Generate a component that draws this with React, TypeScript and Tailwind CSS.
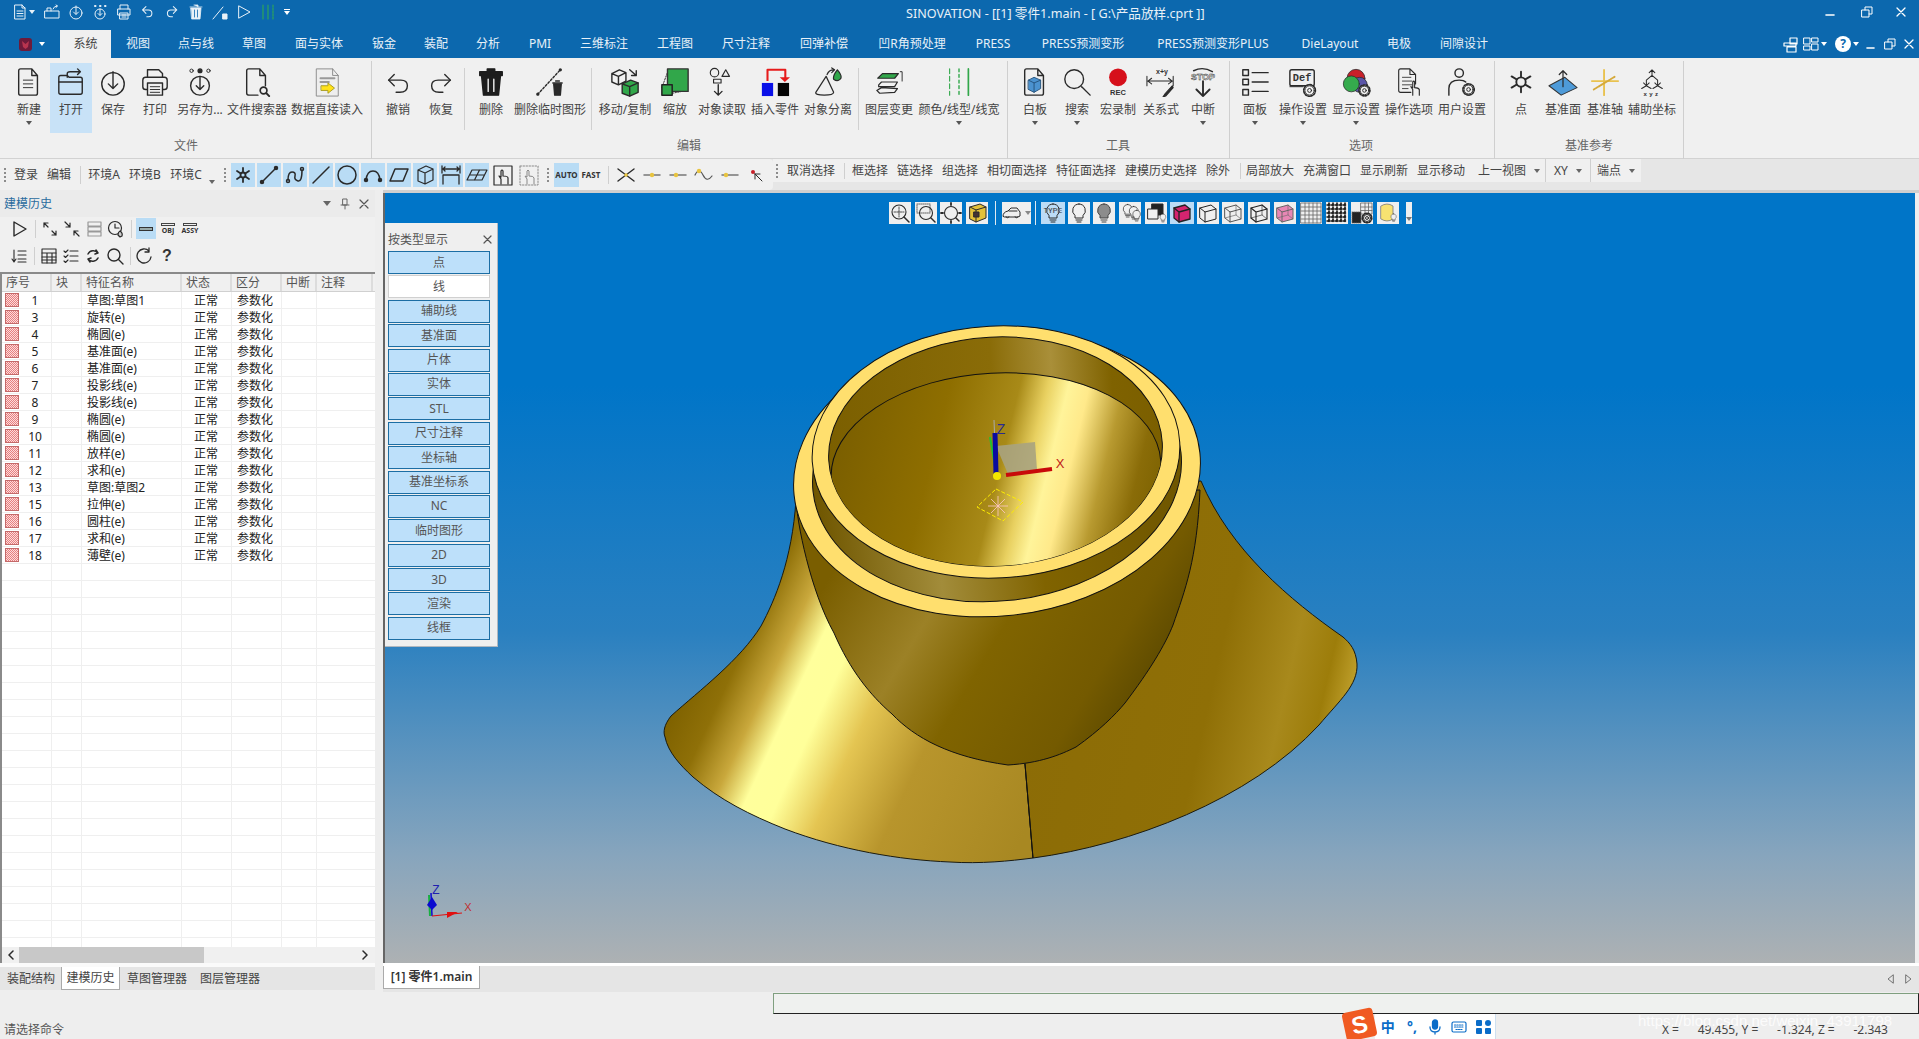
import React from "react";

type N = React.ReactNode;
const K = "#2a2a2a";

function S({ s = 30, v = 32, w = 1.5, c = K, children }: { s?: number; v?: number; w?: number; c?: string; children: N }) {
  return (
    <svg width={s} height={s} viewBox={`0 0 ${v} ${v}`} fill="none" stroke={c} strokeWidth={w} strokeLinecap="round" strokeLinejoin="round" className="block shrink-0">
      {children}
    </svg>
  );
}
const Gear = ({ x, y, r = 4 }: { x: number; y: number; r?: number }) => (
  <g>
    <circle cx={x} cy={y} r={r + 1.2} fill="#f0f0f0" stroke={K} strokeWidth={1.8} strokeDasharray="1.6 1.6" />
    <circle cx={x} cy={y} r={r} fill="#f0f0f0" stroke={K} strokeWidth={1} />
    <circle cx={x} cy={y} r={r / 2.4} stroke={K} strokeWidth={1} />
  </g>
);
const Doc = ({ f = "none" }: { f?: string }) => <path d="M7 2h12l6 7v19q0 2-2 2H7q-2 0-2-2V4q0-2 2-2zM19 2v7h6" fill={f} />;

const ribbonIcons: Record<string, N> = {
  new: <S><Doc /><path d="M10 14h10M10 18h10M10 22h10" strokeWidth={1} /></S>,
  open: (
    <S>
      <path d="M3 13v14q0 2 2 2h21q2 0 2-2V13q0-2-2-2H14l-2-2H5q-2 0-2 2z" />
      <path d="M3 16h25" />
      <path d="M12 11V7q0-2 3-2h11M23 2l3 3-3 3" />
    </S>
  ),
  save: <S><circle cx="16" cy="18" r="12" /><path d="M16 5v18M11 18l5 5 5-5" /></S>,
  print: (
    <S>
      <path d="M8 11V3h12l4 4v4" />
      <rect x="3" y="11" width="26" height="13" rx="3" />
      <rect x="8" y="17" width="16" height="13" fill="#f0f0f0" />
      <path d="M11 21h10M11 24h10M11 27h10" strokeWidth={1} />
    </S>
  ),
  saveas: (
    <S>
      <circle cx="7" cy="4" r="1.8" strokeWidth={1} /><circle cx="16" cy="4" r="2" fill={K} /><circle cx="25" cy="4" r="1.8" strokeWidth={1} />
      <circle cx="16" cy="20" r="10" /><path d="M16 10v14M12 20l4 4 4-4" />
    </S>
  ),
  filesearch: (
    <S>
      <path d="M8 30q-3 0-3-2V4q0-2 2-2h12l6 7v11M19 2v7h6M8 30h9" />
      <circle cx="23" cy="25" r="3.6" strokeWidth={1.8} /><path d="M26 28l3 3" strokeWidth={2} />
    </S>
  ),
  dataread: (
    <S w={1}>
      <path d="M5 2h17l6 7v22H5zM22 2v7h6" fill="#eeeeee" stroke="#8a8a8a" />
      <path d="M9 12h15M9 16h9" stroke="#999" strokeWidth={2} />
      <path d="M10 20h7v-3l7 5.5-7 5.5v-3h-7z" fill="#ffe21a" stroke="#a89a20" />
    </S>
  ),
  undo: <S><path d="M12 8L6 14l6 6" /><path d="M6 14h13q7 0 7 6 0 7-8 7h-4" /></S>,
  redo: <S><path d="M20 8l6 6-6 6" /><path d="M26 14H13q-7 0-7 6 0 7 8 7h4" /></S>,
  del: (
    <S c="#1d1d1d">
      <rect x="4" y="5" width="24" height="4" fill="#1d1d1d" />
      <rect x="12" y="2" width="8" height="3" fill="#1d1d1d" />
      <path d="M6 10h20l-2 20H8z" fill="#1d1d1d" />
      <path d="M13 13v13M19 13v13" stroke="#f0f0f0" strokeWidth={1.5} />
    </S>
  ),
  deltemp: (
    <S>
      <path d="M3 29L27 3" strokeDasharray="2 2" />
      <circle cx="27" cy="3" r="1" fill={K} /><circle cx="3" cy="29" r="1" fill={K} />
      <path d="M19 17h10M22 15h4" />
      <path d="M20 18h8l-1 12h-6z" fill={K} />
    </S>
  ),
  move: (
    <S>
      <path d="M2 7l8-4 7 3v9l-8 4-7-3zM2 7l7 3 8-4M9 10v9" fill="#f2f2f2" />
      <path d="M13 18l9-4 8 3v10l-9 4-8-3z" fill="#31a74a" />
      <path d="M13 18l8 3 9-4M21 21v10" />
      <path d="M21 3l7 6M28 4v5h-5" />
    </S>
  ),
  scale: (
    <S>
      <path d="M2 22L9 3" strokeDasharray="1.5 1.5" strokeWidth={1} />
      <path d="M13 28l16-3" strokeDasharray="1.5 1.5" strokeWidth={1} />
      <rect x="8" y="2" width="22" height="24" fill="#31a74a" stroke="#333" />
      <rect x="2" y="19" width="11" height="11" fill="#31a74a" stroke="#222" strokeWidth={1.6} />
    </S>
  ),
  objread: (
    <S w={1.2}>
      <circle cx="8" cy="6" r="4.5" />
      <path d="M16 10l4-7 4 7z" />
      <rect x="7" y="13" width="8" height="4" />
      <path d="M12 19v11M8 26l4 4 4-4" strokeWidth={1.5} />
    </S>
  ),
  insert: (
    <S>
      <path d="M8 15V3h19v9" stroke="#e61b1b" strokeWidth={2.2} strokeLinecap="butt" />
      <path d="M21 11h11l-5.5 5z" fill="#e61b1b" stroke="none" />
      <rect x="2" y="17" width="12" height="14" fill="#0a10e8" stroke="none" />
      <rect x="19" y="17" width="12" height="14" fill="#050505" stroke="none" />
    </S>
  ),
  separate: (
    <S w={1.3}>
      <path d="M14 10L3 27q-1 3 9 3t10-3z" />
      <path d="M15 8q2-5 7-5M20 1l3 2-3 3" />
      <path d="M26 3q6 7 3 10t-7 0q-1-4 4-10z" fill="#31a74a" />
    </S>
  ),
  layer: (
    <S w={1.3}>
      <path d="M8 22l-5 3 3 3 16-1 3-4zM5 19l3-3h17l-3 5H5z" fill="#f0f0f0" />
      <path d="M4 10l5-5h17l-4 5z" fill="#31a74a" transform="translate(0 2)" />
      <path d="M28 5h2v10" strokeWidth={1} />
    </S>
  ),
  color: (
    <S>
      <path d="M6 2v28" stroke="#31a74a" strokeDasharray="5 3" strokeWidth={1.2} />
      <path d="M16 2v28" stroke="#31a74a" strokeDasharray="3 3" strokeWidth={1.5} />
      <path d="M26 2v28" stroke="#31a74a" strokeWidth={1.8} />
    </S>
  ),
  board: (
    <S>
      <Doc />
      <path d="M9 14l6-3 7 3v9l-7 4-6-3z" fill="#4b92cf" stroke="#24527c" strokeWidth={1} />
      <path d="M9 14l6 3 7-3M15 17v10" stroke="#24527c" strokeWidth={1} />
    </S>
  ),
  search: <S><circle cx="13" cy="13" r="10" /><path d="M21 21l9 9" /></S>,
  rec: (
    <S>
      <circle cx="16" cy="11" r="9.5" fill="#d6101b" stroke="none" />
      <text x="16" y="30" textAnchor="middle" fontSize="8" fontWeight="700" fill="#333" stroke="none" fontFamily="Liberation Sans">REC</text>
    </S>
  ),
  rel: (
    <S w={1.1}>
      <text x="17" y="7" textAnchor="middle" fontSize="7.5" fontWeight="700" fill="#333" stroke="none" fontFamily="Liberation Sans">x+y</text>
      <path d="M1 10v10M29 10v10M2 15h26M6 12l-4 3 4 3M24 12l4 3-4 3" />
      <path d="M28 20L20 29l-2 3 3-1 8-9z" fill={K} />
    </S>
  ),
  stop: (
    <S w={1.5}>
      <path d="M6 4q10-5 20 1" />
      <text x="16" y="14" textAnchor="middle" fontSize="9.5" fontWeight="700" fill="#f0f0f0" stroke={K} strokeWidth={0.5} fontFamily="Liberation Sans">STOP</text>
      <path d="M16 15v16M9 24l7 7 7-7" strokeWidth={2} />
    </S>
  ),
  panel: (
    <S>
      <rect x="3" y="3" width="6" height="6" /><rect x="3" y="13" width="6" height="6" /><rect x="3" y="24" width="6" height="6" />
      <path d="M13 6h17M13 16h17M13 26h17" />
    </S>
  ),
  def: (
    <S>
      <rect x="2" y="3" width="26" height="17" rx="2" />
      <path d="M2 21l14 0" strokeWidth={1} />
      <text x="15" y="15" textAnchor="middle" fontSize="11" fontWeight="700" fill="#333" stroke="none" fontFamily="Liberation Mono">Def</text>
      <Gear x={23} y={25} r={5} />
    </S>
  ),
  disp: (
    <S w={0.8}>
      <circle cx="16" cy="12" r="9.5" fill="#c8202a" />
      <circle cx="20" cy="19" r="8" fill="#5a55a8" />
      <circle cx="11" cy="18" r="8.5" fill="#35ab4d" />
      <Gear x={25} y={25} r={4.6} />
    </S>
  ),
  opopt: (
    <S w={1.2}>
      <path d="M18 27H7q-2 0-2-2V4q0-2 2-2h10l6 6v10M17 2v6h6" />
      <path d="M9 11h9M9 15h10M9 19h10M9 23h6" strokeWidth={0.9} />
      <path d="M20 30v-6l-2-3 2 1v-6q1-2 2 0v6q4 0 5 2v6" fill="#f0f0f0" />
    </S>
  ),
  user: (
    <S>
      <circle cx="13" cy="6.5" r="4.5" />
      <path d="M2 30V23q0-9 11-9 5 0 7 2" />
      <Gear x={23} y={24} r={4.8} />
    </S>
  ),
  point: (
    <S w={2}>
      <path d="M16 5v22M6 10l20 12M26 10L6 22" />
      <circle cx="16" cy="16" r="5" fill="#f0f0f0" strokeWidth={2} />
    </S>
  ),
  plane: (
    <S w={1.1}>
      <path d="M1 20L18 11l13 11-17 8z" fill="#4e9bd9" stroke="#333" />
      <path d="M16 21V4M12 8l4-4 4 4" strokeWidth={1.3} />
    </S>
  ),
  axis: (
    <S c="#e9c24f" w={2}>
      <path d="M15 3v27" />
      <path d="M2 15h28" />
      <path d="M4 24L27 10" stroke="#d5a93a" strokeDasharray="2 1" />
    </S>
  ),
  aux: (
    <S w={1.1}>
      <path d="M16 3v6M13 6l3-3 3 3M16 9l-6 5M16 9l6 5M10 14v5M7 17l3 3 3-3M22 14v5M19 17l3 3 3-3M10 20l-5 3M10 20l5 3M22 20l-5 3M22 20l5 3" />
      <text x="16" y="31" textAnchor="middle" fontSize="6.5" fontWeight="700" fill="#333" stroke="none" letterSpacing="2.5" fontFamily="Liberation Sans">xyz</text>
    </S>
  ),
};

type Btn = { l: string; w: number; i: string; a?: boolean; on?: boolean } | { sep: [number, number] };
type Group = { title: string; pl: number; pr: number; items: Btn[] };
const groups: Group[] = [
  { title: "文件", pl: 8, pr: 7, items: [
    { l: "新建", w: 42, i: "new", a: true }, { l: "打开", w: 42, i: "open", on: true }, { l: "保存", w: 42, i: "save" }, { l: "打印", w: 42, i: "print" },
    { l: "另存为...", w: 48, i: "saveas" }, { l: "文件搜索器", w: 66, i: "filesearch" }, { l: "数据直接读入", w: 74, i: "dataread" },
  ] },
  { title: "编辑", pl: 5, pr: 6, items: [
    { l: "撤销", w: 42, i: "undo" }, { l: "恢复", w: 44, i: "redo" }, { sep: [1, 5] }, { l: "删除", w: 42, i: "del" }, { l: "删除临时图形", w: 76, i: "deltemp" }, { sep: [3, 3] },
    { l: "移动/复制", w: 60, i: "move" }, { l: "缩放", w: 40, i: "scale" }, { l: "对象读取", w: 54, i: "objread" }, { l: "插入零件", w: 52, i: "insert" }, { l: "对象分离", w: 54, i: "separate" }, { sep: [3, 2] },
    { l: "图层变更", w: 56, i: "layer" }, { l: "颜色/线型/线宽", w: 84, i: "color", a: true },
  ] },
  { title: "工具", pl: 6, pr: 7, items: [
    { l: "白板", w: 42, i: "board", a: true }, { l: "搜索", w: 42, i: "search", a: true }, { l: "宏录制", w: 40, i: "rec" }, { l: "关系式", w: 46, i: "rel" }, { l: "中断", w: 38, i: "stop", a: true },
  ] },
  { title: "选项", pl: 4, pr: 6, items: [
    { l: "面板", w: 42, i: "panel", a: true }, { l: "操作设置", w: 54, i: "def", a: true }, { l: "显示设置", w: 52, i: "disp", a: true }, { l: "操作选项", w: 54, i: "opopt" }, { l: "用户设置", w: 52, i: "user" },
  ] },
  { title: "基准参考", pl: 5, pr: 5, items: [
    { l: "点", w: 42, i: "point" }, { l: "基准面", w: 42, i: "plane" }, { l: "基准轴", w: 42, i: "axis" }, { l: "辅助坐标", w: 52, i: "aux" },
  ] },
];

const tabs: [string, number][] = [
  ["系统", 51], ["视图", 54], ["点与线", 62], ["草图", 54], ["面与实体", 76], ["钣金", 54], ["装配", 50], ["分析", 54], ["PMI", 50], ["三维标注", 78],
  ["工程图", 64], ["尺寸注释", 78], ["回弹补偿", 78], ["凹R角预处理", 98], ["PRESS", 64], ["PRESS预测变形", 116], ["PRESS预测变形PLUS", 144], ["DieLayout", 90], ["电极", 48], ["间隙设计", 82],
];

const W = "#e8f1f8";
const qat: N[] = [
  <S s={16} v={16} c={W} w={1}><path d="M3 1h7l3 3v11H3zM5 7h6M5 9.500h6M5 12h6M10 1v3h3" /></S>,
  <S s={16} v={16} c={W} w={1}><path d="M1 7h14v7H1zM3 7V4h4v3M9 5q1-3 4-3M12 1l1.500 1-1.500 1.500" /></S>,
  <S s={16} v={16} c={W} w={1}><circle cx="8" cy="9" r="6" /><path d="M8 2v8M5.500 8L8 10.500 10.500 8" /></S>,
  <S s={16} v={16} c={W} w={1}><path d="M3 2h.5M8 2h.5M13 2h.5" strokeWidth={2} /><circle cx="8" cy="10" r="5" /><path d="M8 5v6M6 9.500l2 2 2-2" /></S>,
  <S s={16} v={16} c={W} w={1}><path d="M4 5V1h8v4M2 5h12v6H2zM4 9h8v6H4zM6 11h4M6 13h4" /></S>,
  <S s={16} v={16} c={W} w={1.2}><path d="M6 2L2 6l4 4M2 6h7q4 0 4 4t-4 4H7" transform="scale(.85) translate(1 1)" /></S>,
  <S s={16} v={16} c={W} w={1.2}><path d="M10 2l4 4-4 4M14 6H7q-4 0-4 4t4 4h2" transform="scale(.85) translate(1 1)" /></S>,
  <S s={16} v={16} c={W} w={0.8}><path d="M2 3h12M6 1h4v2M3 4h10l-1 11H4z" fill={W} /><path d="M6.500 6v7M9.500 6v7" stroke="#0c68ae" /></S>,
  <S s={16} v={16} c={W} w={1}><path d="M1 15L11 3" /><path d="M11 10h4v5h-4z" fill={W} /></S>,
  <S s={16} v={16} c={W} w={1}><path d="M3 2l11 6-11 6z" /></S>,
  <S s={16} v={16} c="#2ea45a" w={1.2}><path d="M3 1v14M8 1v14" /><path d="M13 1v14" strokeDasharray="2 1" /></S>,
];

const Grip = ({ w = 8 }: { w?: number }) => (
  <div className="flex flex-col items-center justify-center gap-[2px] shrink-0" style={{ width: w }}>
    {[0, 1, 2, 3].map((i) => <div key={i} className="w-[2px] h-[2px] bg-[#8c8c8c]" />)}
  </div>
);
const Tri = ({ c = "#666" }: { c?: string }) => <span className="inline-block w-0 h-0 border-l-[3px] border-r-[3px] border-t-[4px] border-l-transparent border-r-transparent" style={{ borderTopColor: c }} />;

const rowIcons: N[] = [
  <S s={20} v={20} w={1.8}><path d="M10 3v14M4 6l12 8M16 6L4 14" /><circle cx="10" cy="10" r="2.5" fill="#b9dcf5" /></S>,
  <S s={22} v={22}><path d="M4 18L18 4" /><circle cx="4" cy="18" r="1.500" fill={K} /><circle cx="18" cy="4" r="1.500" fill={K} /></S>,
  <S s={22} v={22}><path d="M4 16q0-8 4-8t3 4 3 5 4-11" /><circle cx="4" cy="17" r="1.500" /><circle cx="18" cy="5" r="1.500" /></S>,
  <S s={22} v={22}><path d="M3 19L19 3" /></S>,
  <S s={22} v={22}><circle cx="11" cy="11" r="9" /></S>,
  <S s={22} v={22}><path d="M4 16q1-9 7-9t7 9" /><circle cx="4" cy="16" r="1.500" fill={K} /><circle cx="18" cy="16" r="1.500" fill={K} /></S>,
  <S s={22} v={22}><path d="M7 5h13l-5 12H2z" /></S>,
  <S s={22} v={22} w={1.2}><path d="M4 6l8-4 7 3v11l-8 4-7-3zM4 6l7 3 8-4M11 9v11" /></S>,
  <S s={22} v={22} w={1.3}><path d="M2 2v7M20 2v7M3 5h16M5 3L3 5l2 2M17 3l2 2-2 2M3 11h16M3 11v9M19 11v9" /></S>,
  <S s={22} v={22} w={1.2}><path d="M6 6h15l-5 10H1zM3.500 11h15M13.500 6l-5 10" /></S>,
  <S s={22} v={22} w={1.2}><rect x="2" y="2" width="18" height="19" /><path d="M9 20v-5l-2-3 2 1V7q1-2 2 0v5q5 0 5 2v6" fill="#f0f0f0" /></S>,
  <S s={22} v={22} c="#888" w={1}><rect x="2" y="2" width="18" height="19" strokeDasharray="1.500 1.500" /><path d="M9 20v-5l-2-3 2 1V7q1-2 2 0v5q5 0 5 2v6" /></S>,
];
const snapIcons: N[] = [
  <S s={20} v={20} w={1.4}><path d="M2 4l16 12M18 4L2 16" /><circle cx="10" cy="10" r="1.800" fill="#e8c440" stroke="none" /></S>,
  <S s={20} v={20} c="#777"><path d="M2 10h16" /><circle cx="10" cy="10" r="2.200" fill="#e8c440" stroke="none" /></S>,
  <S s={20} v={20} c="#777"><path d="M2 10h16" /><circle cx="8" cy="10" r="2.200" fill="#e8c440" stroke="none" /></S>,
  <S s={20} v={20} c="#555" w={1.2}><path d="M1 10q4-8 8 0t9 1" /><circle cx="5" cy="6" r="2.200" fill="#e8c440" stroke="none" /></S>,
  <S s={20} v={20} c="#777"><path d="M2 10h16" /><circle cx="6" cy="10" r="2.200" fill="#e8c440" stroke="none" /></S>,
  <S s={20} v={20} w={1}><circle cx="7" cy="7" r="2" fill="#c8202a" stroke="none" /><path d="M9 9l7 7M9 9v5M9 9h5" /></S>,
];

const Pipe = ({ h = 18, c = "#cfcfcf", w = 8 }: { h?: number; c?: string; w?: number }) => (
  <div className="flex items-center justify-center shrink-0" style={{ width: w }}><div className="w-px" style={{ height: h, background: c }} /></div>
);
const TB = ({ t, w, a }: { t: string; w: number; a?: boolean }) => (
  <div className="flex items-center justify-center gap-[8px] whitespace-nowrap shrink-0" style={{ width: w }}>{t}{a && <Tri />}</div>
);

const histIcons1: (N | "|")[] = [
  <S s={18} v={18} w={1.4}><path d="M3 2l12 7-12 7z" /></S>,
  "|",
  <S s={18} v={18} w={1.2}><path d="M3 3l4 4M3 3h4M3 3v4M11 11l4 4M15 15h-4M15 15v-4" /></S>,
  <S s={18} v={18} w={1.2}><path d="M2 2l5 5M7 7H3M7 7V3M16 16l-5-5M11 11h4M11 11v4" /></S>,
  <S s={18} v={18} c="#999" w={1.2}><path d="M3 2h13v4H3zM3 7h13v4H3zM3 12h13v4H3z" /></S>,
  <S s={18} v={18} w={1.2}><circle cx="8" cy="8" r="6.500" /><path d="M8 4v4h4" /><path d="M13 11q3 2 2 5l-2 1-2-2q0-3 2-4z" fill="#ccc" /></S>,
  "|",
];
const histIcons2: (N | "|")[] = [
  <S s={18} v={18} w={1.1}><path d="M4 3v12M2 12l2 3 2-3M8 4h8M8 8h8M8 12h8M8 15h8" /></S>,
  "|",
  <S s={18} v={18} w={1.1}><rect x="2" y="2" width="14" height="14" /><path d="M2 6h14M2 10h14M2 13h14M7 6v10M12 6v10" /></S>,
  <S s={18} v={18} w={1.1}><path d="M2 4l1.500 1.500L6 3M2 9l1.500 1.500L6 8M2 14l1.500 1.500L6 13M8 4h8M8 9h8M8 14h8" /></S>,
  <S s={18} v={18} w={1.5}><path d="M4 7a6 6 0 0 1 10-1M14 11a6 6 0 0 1-10 1M12 3l2 3-3 1M6 15l-2-3 3-1" /></S>,
  <S s={18} v={18} w={1.4}><circle cx="8" cy="8" r="6" /><path d="M12.500 12.500L17 17" /></S>,
  "|",
];

const rows: [string, string][] = [
  ["1", "草图:草图1"], ["3", "旋转(e)"], ["4", "椭圆(e)"], ["5", "基准面(e)"], ["6", "基准面(e)"], ["7", "投影线(e)"], ["8", "投影线(e)"], ["9", "椭圆(e)"],
  ["10", "椭圆(e)"], ["11", "放样(e)"], ["12", "求和(e)"], ["13", "草图:草图2"], ["15", "拉伸(e)"], ["16", "圆柱(e)"], ["17", "求和(e)"], ["18", "薄壁(e)"],
];
const cols = [50, 30, 100, 50, 50, 35, 56];
const heads = ["序号", "块", "特征名称", "状态", "区分", "中断", "注释"];
const types = ["点", "线", "辅助线", "基准面", "片体", "实体", "STL", "尺寸注释", "坐标轴", "基准坐标系", "NC", "临时图形", "2D", "3D", "渲染", "线框"];

const Bulb = ({ f = "#f0f0f0", c = K, x = 0, y = 0, k = 1 }: { f?: string; c?: string; x?: number; y?: number; k?: number }) => (
  <g transform={`translate(${x} ${y}) scale(${k})`}>
    <path d="M11 2a6.500 6.500 0 0 0-4 11.500V16h8v-2.500A6.500 6.500 0 0 0 11 2z" fill={f} stroke={c} strokeWidth={1} />
    <path d="M8 18h6M9 20h4" stroke={c} strokeWidth={1} />
  </g>
);
const Cube = ({ f = "none", c = "#222", w = 1, inner = false }: { f?: string; c?: string; w?: number; inner?: boolean }) => (
  <g fill={f} stroke={c} strokeWidth={w}>
    <path d="M3 6l11-3 5 4v10l-11 3-5-4z" />
    <path d="M3 6l5 4 11-3M8 10v10" fill="none" />
    {inner && <path d="M14 3v10l5 4M14 13L3 16" fill="none" strokeWidth={0.6} />}
  </g>
);
const vp: { n: N; on?: boolean }[] = [
  { n: <S s={22} v={22} w={1.1}><circle cx="10" cy="10" r="7" /><path d="M15 15l5 5" strokeWidth={1.500} /><path d="M10 5v10M5 10h10" strokeDasharray="2 1" strokeWidth={0.8} /></S> },
  { n: <S s={22} v={22} w={1.1}><circle cx="11" cy="11" r="6.500" /><path d="M16 16l4 4" strokeWidth={1.500} /><rect x="2" y="2" width="13" height="9" strokeDasharray="1 1" strokeWidth={0.7} /></S> },
  { n: <S s={22} v={22} w={1.1}><circle cx="11" cy="11" r="6.500" /><path d="M16 16l3 3" strokeWidth={1.500} /><path d="M11 1v2M11 19v2M1 11h2M19 11h2" strokeWidth={1.800} /></S> },
  { n: <S s={22} v={22} w={1}><path d="M4 5l10-3 6 3v11l-10 4-6-3z" fill="#e3c13a" /><path d="M4 5l6 3 10-3M10 8v12" /><rect x="8" y="10" width="5" height="5" fill="#433" /></S> },
];
const vp2: { n: N; on?: boolean }[] = [
  { n: <S s={22} v={22}><Bulb f="#bcdcf6" /><text x="11" y="11" textAnchor="middle" fontSize="7" fontWeight="700" fill="#333" stroke="#bcdcf6" strokeWidth="0.2" fontFamily="Liberation Sans">TYPE</text></S>, on: true },
  { n: <S s={22} v={22}><Bulb /></S> },
  { n: <S s={22} v={22}><Bulb f="#8c8c8c" c="#444" /></S> },
  { n: <S s={22} v={22}><Bulb k={0.7} x={1} y={1} /><Bulb k={0.7} x={7} y={3} /><Bulb k={0.6} x={11} y={7} /></S> },
  { n: <S s={22} v={22} w={1}><rect x="7" y="2" width="11" height="11" fill="#222" /><rect x="3" y="7" width="10" height="10" fill="#f0f0f0" /><Bulb k={0.45} x={13} y={11} /></S> },
  { n: <S s={22} v={22}><Cube f="#d6246f" w={1.300} /></S>, on: true },
  { n: <S s={22} v={22}><Cube /></S> },
  { n: <S s={22} v={22}><Cube c="#555" inner /></S> },
  { n: <S s={22} v={22}><Cube w={1.100} inner /></S> },
  { n: <S s={22} v={22}><Cube f="#e887b5" c="#666" inner /></S> },
  { n: <S s={22} v={22} c="#666" w={0.8}><path d="M1 1h20v20H1zM1 5h20M1 9h20M1 13h20M1 17h20M5 1v20M9 1v20M13 1v20M17 1v20" /></S> },
  { n: <S s={22} v={22} c="#111" w={1.6}><path d="M1 3h20M1 7h20M1 11h20M1 15h20M1 19h20M3 1v20M7 1v20M11 1v20M15 1v20M19 1v20" strokeDasharray="2.500 1.500" /></S> },
  { n: <S s={22} v={22} c="#666" w={0.8}><path d="M10 1h11v11H10zM10 5h11M10 8.500h11M14 1v11M17.500 1v11" /><rect x="1" y="10" width="9" height="11" fill="#222" strokeDasharray="1 1" /><Gear x={16} y={16} r={3.500} /></S> },
  { n: <S s={22} v={22} w={0.8} c="#777"><path d="M4 4q6-4 12 0v13q-6 4-12 0z" fill="#f7e271" /><Bulb k={0.42} x={12} y={11} /></S> },
];
const VBtn = ({ b }: { b: { n: N; on?: boolean } }) => (
  <div className="w-[25.800px] flex justify-center shrink-0">
    <div className={`h-[22px] flex items-center justify-center shrink-0 ${b.on ? "w-[24px] bg-[#bcdcf6]" : "w-[22px] bg-[#efefef]"}`}>{b.n}</div>
  </div>
);

function Model() {
  return (
    <svg viewBox="385 193 1530 770" className="absolute inset-0 w-full h-full">
      <defs>
        <linearGradient id="fl" gradientUnits="userSpaceOnUse" x1="681" y1="695" x2="1016" y2="851">
          <stop offset="0" stopColor="#7f6200" /><stop offset="0.1" stopColor="#8f7008" /><stop offset="0.2" stopColor="#c9a83c" />
          <stop offset="0.28" stopColor="#ffff9c" /><stop offset="0.36" stopColor="#ffff9a" /><stop offset="0.48" stopColor="#e4c552" />
          <stop offset="0.66" stopColor="#b8952c" /><stop offset="1" stopColor="#a88822" />
        </linearGradient>
        <linearGradient id="fr" gradientUnits="userSpaceOnUse" x1="1050" y1="620" x2="1357" y2="690">
          <stop offset="0" stopColor="#8c6c06" /><stop offset="0.55" stopColor="#8f6f06" /><stop offset="0.78" stopColor="#a8891c" />
          <stop offset="0.9" stopColor="#9d7d0a" /><stop offset="1" stopColor="#c2a32f" />
        </linearGradient>
        <linearGradient id="bw" gradientUnits="userSpaceOnUse" x1="840" y1="560" x2="1140" y2="740">
          <stop offset="0" stopColor="#7a5e00" /><stop offset="0.3" stopColor="#9c8126" /><stop offset="0.5" stopColor="#806400" />
          <stop offset="0.8" stopColor="#745a00" /><stop offset="1" stopColor="#564500" />
        </linearGradient>
        <linearGradient id="gp" gradientUnits="userSpaceOnUse" x1="813" y1="0" x2="1180" y2="0">
          <stop offset="0" stopColor="#6f5600" /><stop offset="0.32" stopColor="#a28c3a" /><stop offset="0.6" stopColor="#806300" /><stop offset="1" stopColor="#6f5600" />
        </linearGradient>
        <linearGradient id="wl" gradientUnits="userSpaceOnUse" x1="829" y1="0" x2="1162" y2="0">
          <stop offset="0" stopColor="#7b5f00" /><stop offset="0.5" stopColor="#8a6c08" /><stop offset="0.68" stopColor="#a98f39" /><stop offset="0.86" stopColor="#7f6200" /><stop offset="1" stopColor="#7b5f00" />
        </linearGradient>
        <linearGradient id="fo" gradientUnits="userSpaceOnUse" x1="836" y1="423" x2="1161" y2="521">
          <stop offset="0" stopColor="#7a5e00" /><stop offset="0.3" stopColor="#8e6e00" /><stop offset="0.5" stopColor="#a88a18" />
          <stop offset="0.58" stopColor="#e8d060" /><stop offset="0.64" stopColor="#fff49a" /><stop offset="0.7" stopColor="#ffe98a" />
          <stop offset="0.8" stopColor="#b89a30" /><stop offset="0.9" stopColor="#8a6c08" /><stop offset="1" stopColor="#7a6000" />
        </linearGradient>
        <clipPath id="ic"><ellipse cx="995.500" cy="451.500" rx="167" ry="114.500" transform="rotate(-3 995.500 451.500)" /></clipPath>
      </defs>
      <path d="M796 500C792 560 775 600 761 626C740 660 700 690 671 716C664 725 663 732 665 737C668 752 680 765 693 777C720 800 750 815 785 829C840 850 900 860 950 862C980 864 1010 861 1033 858L1025 764L1000 500Z" fill="url(#fl)" stroke="#1a1a10" strokeWidth="1" />
      <path d="M1000 500L1025 764L1033 858C1130 845 1250 800 1319 725C1340 700 1358 685 1357 664C1356 650 1350 643 1343 637C1290 600 1230 550 1201 481Z" fill="url(#fr)" stroke="#1a1a10" strokeWidth="1" />
      <path d="M796 500C797 522 810 590 834 633C850 670 870 695 892 714C915 738 950 757 1008 765C1040 763 1060 755 1076 747C1100 730 1115 715 1125 703C1150 670 1165 645 1173 625C1185 590 1197 560 1200 490Z" fill="url(#bw)" stroke="#111" strokeWidth="1" />
      <ellipse cx="997" cy="474" rx="204" ry="142" transform="rotate(-6 997 474)" fill="#ffdf6e" stroke="#111" strokeWidth="1" />
      <ellipse cx="997" cy="472" rx="185" ry="129" transform="rotate(-6 997 472)" fill="url(#gp)" stroke="#111" strokeWidth="1" />
      <ellipse cx="996" cy="452" rx="184" ry="126" transform="rotate(-3 996 452)" fill="#ffdf6e" stroke="#111" strokeWidth="1" />
      <ellipse cx="995.500" cy="451.500" rx="167" ry="114.500" transform="rotate(-3 995.500 451.500)" fill="url(#wl)" stroke="#111" strokeWidth="1" />
      <g clipPath="url(#ic)">
        <ellipse cx="996" cy="470" rx="165" ry="97" transform="rotate(-3 996 470)" fill="url(#fo)" stroke="#111" strokeWidth="1" />
      </g>
      <path d="M996 446L1035 442L1037 470L1008 474Z" fill="#a9a37f" opacity="0.9" />
      <path d="M990 437L996 472" stroke="#22c030" strokeWidth="2" />
      <path d="M994 420L996 474" stroke="#aaa" strokeWidth="1" />
      <path d="M995 433L996 474" stroke="#0a0aa0" strokeWidth="5" />
      <path d="M1006 475L1052 469" stroke="#c80a0a" strokeWidth="4" />
      <circle cx="997" cy="476" r="4" fill="#f4e800" />
      <text x="1001" y="434" fontSize="14" fill="#2a2a90" textAnchor="middle" fontFamily="Liberation Sans">Z</text>
      <text x="1060" y="468" fontSize="13" fill="#c01818" textAnchor="middle" fontFamily="Liberation Sans">X</text>
      <path d="M996 489L1023 502L1003 521L977 507Z" fill="none" stroke="#ffee00" strokeWidth="1" strokeDasharray="4 2" />
      <path d="M998 496V516M988 506H1008M991 499L1005 513M1005 499L991 513" stroke="#ffc8c8" strokeWidth="0.8" />
      <path d="M1025 764L1033 858" stroke="#111" strokeWidth="1" />
      <path d="M431 895L432 916" stroke="#18b040" strokeWidth="2" transform="translate(-2 0)" />
      <path d="M431 893L432 916" stroke="#0a0ad0" strokeWidth="1.500" />
      <path d="M432 897L437 905L432 910L427 905Z" fill="#0a0ad0" />
      <path d="M432 916L462 913" stroke="#e01010" strokeWidth="1.200" />
      <path d="M447 912L458 912L447 918Z" fill="#e01010" />
      <text x="436" y="894" fontSize="12" fill="#2020b0" textAnchor="middle" fontFamily="Liberation Sans">Z</text>
      <text x="468" y="911" fontSize="11" fill="#c03030" textAnchor="middle" fontFamily="Liberation Sans">X</text>
    </svg>
  );
}

export default function App() {
  return (
    <div className="w-[1919px] h-[1039px] overflow-hidden flex flex-col bg-[#eeeeee] text-[12px] text-[#444] font-['Noto_Sans','Noto_Sans_CJK_SC',sans-serif]">
      {/* title */}
      <div className="h-[30px] bg-[#0c68ae] flex items-center text-[#e8f1f8] shrink-0">
        <div className="flex items-center w-[906px] pl-[12px] pb-[6px]">
          <div className="w-[28px] flex items-center gap-[1px]">{qat[0]}<Tri c="#e8f1f8" /></div>
          {qat.slice(1).map((q, i) => <div key={i} className="w-[24px] flex justify-center">{q}</div>)}
          <div className="w-[24px] -ml-[5px] flex flex-col items-center gap-[1px]"><div className="w-[6px] h-px bg-white" /><Tri c="#fff" /></div>
        </div>
        <div className="whitespace-nowrap pb-[2px] text-[12.600px]">SINOVATION - [[1] 零件1.main - [ G:\产品放样.cprt ]]</div>
        <div className="ml-auto flex items-center pb-[6px] pr-[10px]">
          <S s={16} v={16} c="#fff" w={1.6}><path d="M4 11h8" /></S>
          <div className="w-[21px]" />
          <S s={16} v={16} c="#fff" w={1}><path d="M3 6h7v7H3zM6 6V3h7v7h-3" /></S>
          <div className="w-[18px]" />
          <S s={16} v={16} c="#fff" w={1.3}><path d="M4 4l8 8M12 4l-8 8" /></S>
        </div>
      </div>
      {/* tabs */}
      <div className="h-[28px] bg-[#0c68ae] flex items-end text-[#e8f1f8] shrink-0">
        <div className="w-[60px] h-full flex items-center pl-[18px] gap-[6px]">
          <svg width="15" height="15" viewBox="0 0 15 15" className="block"><rect x="1" y="1" width="13" height="13" rx="3" fill="#6d1a3a" /><path d="M4 4l3.500 3L11 4l-1 6-2.500 2L5 10z" fill="#b8344f" /></svg>
          <Tri c="#fff" />
        </div>
        {tabs.map(([t, w], i) => (
          <div key={t} style={{ width: w }} className={`h-full flex items-center justify-center whitespace-nowrap shrink-0 ${i === 0 ? "bg-[#f0f0f0] text-[#444]" : ""}`}>{t}</div>
        ))}
        <div className="ml-auto h-full flex items-center pr-[1px]">
          <div className="w-[26px] flex justify-center"><S s={17} v={17} c="#fff" w={1.200}><path d="M8 2h7v6H8zM2 7h12v3H2zM5 11h9v5H5z" /></S></div>
          <div className="w-[30px] flex items-center gap-[2px]"><S s={16} v={16} c="#fff" w={1}><path d="M1 2h6v6H1zM9 2h6v4H9zM1 10h6v4H1zM9 8h6v6H9z" /></S><Tri c="#fff" /></div>
          <div className="w-[28px] flex items-center gap-[2px] pl-[2px]"><div className="w-[16px] h-[16px] rounded-full bg-white text-[#0c68ae] text-[12px] font-bold flex items-center justify-center">?</div><Tri c="#fff" /></div>
          <div className="w-[19px] flex justify-center"><S s={14} v={14} c="#fff" w={1.6}><path d="M3 11h7" /></S></div>
          <div className="w-[20px] flex justify-center"><S s={14} v={14} c="#fff" w={1}><path d="M2 5h7v7H2zM5 5V2h7v7H9" /></S></div>
          <div className="w-[18px] flex justify-center"><S s={14} v={14} c="#fff" w={1.300}><path d="M3 3l8 8M11 3l-8 8" /></S></div>
        </div>
      </div>
      {/* ribbon */}
      <div className="h-[101px] bg-[#f0f0f0] border-b border-[#d2d2d2] flex shrink-0">
        {groups.map((g) => (
          <div key={g.title} className="h-[98px] mt-[3px] border-r border-[#cfcfcf] flex flex-col" style={{ paddingLeft: g.pl, paddingRight: g.pr }}>
            <div className="flex h-[70px] mt-[2px]">
              {g.items.map((it, i) =>
                "sep" in it ? (
                  <div key={i} className="w-px h-[62px] bg-[#d0d0d0] mt-[5px]" style={{ marginLeft: it.sep[0], marginRight: it.sep[1] }} />
                ) : (
                  <div key={i} style={{ width: it.w }} className={`h-[70px] flex flex-col items-center pt-[4px] shrink-0 ${it.on ? "bg-[#c8e2f7]" : ""}`}>
                    {ribbonIcons[it.i]}
                    <div className="h-[16px] mt-[5px] leading-[16px] whitespace-nowrap">{it.l}</div>
                    {it.a && <div className="mt-[3px] flex"><Tri c="#555" /></div>}
                  </div>
                )
              )}
            </div>
            <div className="mt-[5px] h-[16px] leading-[16px] text-center text-[#666]">{g.title}</div>
          </div>
        ))}
      </div>
      {/* row toolbar */}
      <div className="h-[31px] bg-[#e6e6e6] flex items-start shrink-0">
        <div className="h-[31px] w-[773px] bg-[#f0f0f0] rounded-r-[4px] flex items-stretch shrink-0">
          <Grip w={10} />
          <TB t="登录" w={32} /><TB t="编辑" w={34} />
          <Pipe w={8} />
          <TB t="环境A" w={40} /><TB t="环境B" w={42} /><TB t="环境C" w={40} />
          <div className="w-[12px] flex items-end justify-center pb-[6px]"><Tri /></div>
          <div className="w-[3px]" />
          <Grip w={8} />
          <div className="w-[2px]" />
          {rowIcons.map((n, i) => (
            <div key={i} className={`w-[24px] h-[24px] mt-[4px] mr-[2px] flex items-center justify-center shrink-0 ${i < 10 ? "bg-[#b9dcf5]" : ""}`}>{n}</div>
          ))}
          <Grip w={9} />
          <div className="w-[2px]" />
          <div className="w-[25px] h-[24px] mt-[4px] bg-[#b9dcf5] flex items-center justify-center text-[8px] font-bold text-[#333]">AUTO</div>
          <div className="w-[24px] flex items-center justify-center text-[8px] font-bold text-[#333]">FAST</div>
          <Pipe w={10} />
          {snapIcons.map((n, i) => <div key={i} className="w-[26px] flex items-center justify-center shrink-0">{n}</div>)}
        </div>
        <div className="h-[23px] w-[868px] bg-[#f0f0f0] flex items-stretch shrink-0">
          <Grip w={8} />
          <TB t="取消选择" w={60} />
          <Pipe w={6} h={16} />
          <TB t="框选择" w={46} /><TB t="链选择" w={44} /><TB t="组选择" w={46} /><TB t="相切面选择" w={68} /><TB t="特征面选择" w={70} /><TB t="建模历史选择" w={80} /><TB t="除外" w={34} />
          <Pipe w={10} h={16} />
          <TB t="局部放大" w={50} /><TB t="充满窗口" w={64} /><TB t="显示刷新" w={50} /><TB t="显示移动" w={64} />
          <TB t="上一视图" w={72} a />
          <div className="w-px bg-[#cfcfcf]" />
          <TB t="XY" w={44} a />
          <div className="w-px bg-[#cfcfcf]" />
          <TB t="端点" w={50} a />
        </div>
      </div>
      {/* main */}
      <div className="h-[802px] flex shrink-0">
        {/* left */}
        <div className="w-[383px] shrink-0 flex flex-col">
          <div className="w-[375px] h-[773px] flex flex-col bg-[#f0f0f0] shrink-0">
            <div className="h-[27px] bg-[#ebebeb] flex items-center shrink-0 pl-[4px]">
              <span className="text-[#2a6c9e]">建模历史</span>
              <div className="ml-auto flex items-center pr-[1px]">
                <div className="w-[18px] flex justify-center"><span className="w-0 h-0 border-l-[4px] border-r-[4px] border-t-[5px] border-l-transparent border-r-transparent border-t-[#666]" /></div>
                <div className="w-[18px] flex justify-center"><S s={12} v={12} c="#666" w={1}><path d="M4 1h4v6H4zM2 7h8M6 7v4" /></S></div>
                <div className="w-[20px] flex justify-center"><S s={12} v={12} c="#555" w={1.200}><path d="M2 2l8 8M10 2l-8 8" /></S></div>
              </div>
            </div>
            <div className="h-[23px] flex items-center pl-[9px] shrink-0">
              {histIcons1.map((n, i) => n === "|" ? <Pipe key={i} w={i === 1 ? 8 : 9} /> : <div key={i} className="w-[22px] flex justify-center">{n}</div>)}
              <div className="w-[20px] h-[21px] bg-[#b9dcf5] flex items-center justify-center"><div className="w-[14px] h-[4px] border border-[#333] bg-[#9aa]" /></div>
              <div className="w-[1px]" />
              {["OBJ", "ASSY"].map((t) => (
                <div key={t} className="w-[22px] flex flex-col items-center gap-[1px]">
                  <div className="w-[14px] h-[3px] border border-[#444]" />
                  <div className="text-[7px] leading-[8px] font-bold text-[#333]">{t}</div>
                </div>
              ))}
            </div>
            <div className="h-[32px] flex items-center pl-[8px] shrink-0">
              {histIcons2.map((n, i) => n === "|" ? <Pipe key={i} w={8} /> : <div key={i} className="w-[22px] flex justify-center">{n}</div>)}
              <div className="w-[22px] flex justify-center"><S s={18} v={18} w={1.300}><path d="M13 4a7 7 0 1 0 2 6M13 1v4H9" /></S></div>
              <div className="w-[22px] text-center text-[16px] font-bold text-[#333] font-['Liberation_Sans']">?</div>
            </div>
            {/* table */}
            <div className="flex-1 min-h-0 border-t-2 border-l-2 border-[#8a8a8a] bg-white overflow-hidden">
              <div className="flex h-[18px] bg-[#f0f0f0] border-b border-[#d0d0d0] text-[#555]">
                {heads.map((h, i) => <div key={h} style={{ width: cols[i] }} className="pl-[4px] leading-[17px] border-r-2 border-[#dcdcdc] shrink-0">{h}</div>)}
              </div>
              {Array.from({ length: 40 }).map((_, r) => {
                const d = rows[r];
                return (
                  <div key={r} className="flex h-[17px] border-b border-[#efefef] text-[#222] leading-[17px]">
                    <div style={{ width: cols[0] }} className="flex items-center shrink-0 border-r border-[#efefef]">
                      {d && <div className="ml-[3px] w-[14px] h-[14px] border border-[#c46a6a] bg-[repeating-conic-gradient(#e87f7f_0%_25%,#fbdcdc_0%_50%)] bg-[length:2px_2px]" />}
                      {d && <div className="w-[32px] text-center">{d[0]}</div>}
                    </div>
                    <div style={{ width: cols[1] }} className="shrink-0 border-r border-[#efefef]" />
                    <div style={{ width: cols[2] }} className="shrink-0 border-r border-[#efefef] pl-[5px] whitespace-nowrap">{d?.[1]}</div>
                    <div style={{ width: cols[3] }} className="shrink-0 border-r border-[#efefef] pl-[12px]">{d && "正常"}</div>
                    <div style={{ width: cols[4] }} className="shrink-0 border-r border-[#efefef] pl-[5px]">{d && "参数化"}</div>
                    <div style={{ width: cols[5] }} className="shrink-0 border-r border-[#efefef]" />
                    <div style={{ width: cols[6] }} className="shrink-0" />
                  </div>
                );
              })}
            </div>
            <div className="h-[16px] border-l-2 border-[#8a8a8a] bg-[#f0f0f0] flex items-center shrink-0">
              <div className="w-[17px] flex justify-center"><S s={10} v={10} w={1.500}><path d="M7 1L3 5l4 4" /></S></div>
              <div className="w-[185px] h-full bg-[#c8c8c8]" />
              <div className="ml-auto w-[20px] flex justify-center"><S s={10} v={10} w={1.500}><path d="M3 1l4 4-4 4" /></S></div>
            </div>
          </div>
          <div className="h-[4px] w-[375px] bg-[#fafafa] shrink-0" />
          <div className="h-[23px] w-[375px] bg-[#e5e5e5] flex items-stretch pl-[1px] text-[#444] shrink-0">
            <div className="w-[60px] flex items-center justify-center">装配结构</div>
            <div className="w-[59px] flex items-center justify-center bg-white border border-t-0 border-[#aaa]">建模历史</div>
            <div className="w-[74px] flex items-center justify-center">草图管理器</div>
            <div className="w-[72px] flex items-center justify-center">图层管理器</div>
          </div>
        </div>
        {/* right */}
        <div className="flex-1 min-w-0 flex flex-col">
          <div className="h-[3px] shrink-0 bg-[#cfcfcf]" />
          <div className="relative h-[770px] w-[1532px] border-l-2 border-[#666] bg-[linear-gradient(180deg,#0075c8_0%,#0075c8_25%,#2a80c0_57%,#87a5bd_86%,#adb1b3_100%)] shrink-0 overflow-hidden">
            <Model />
            <div className="absolute left-[502px] top-[8px] flex items-center">
              {vp.map((b, i) => <VBtn key={i} b={b} />)}
              <div className="w-[11.400px] flex justify-center shrink-0"><div className="w-px h-[24px] bg-[#dfeaf2]" /></div>
              <div className="w-[29px] h-[22px] bg-[#efefef] flex items-center justify-center gap-[3px] shrink-0">
                <S s={20} v={20} w={1}><path d="M1 13q0-4 5-5l3-3h6l3 4v4l-2 1H3zM4 14a2 2 0 0 0 3 0M13 14a2 2 0 0 0 3 0M7 8h8" /></S><Tri c="#888" />
              </div>
              <div className="w-[9.400px] flex justify-center shrink-0"><div className="w-px h-[24px] bg-[#dfeaf2]" /></div>
              {vp2.map((b, i) => <VBtn key={i} b={b} />)}
              <div className="ml-[5px] w-[6px] h-[22px] bg-[#efefef] flex items-end justify-center pb-[3px] shrink-0"><Tri c="#777" /></div>
            </div>
            <div className="absolute left-0 top-[30px] w-[113px] h-[424px] bg-[#efefef] border-r border-b border-[#b0b8c0] px-[3px]">
              <div className="h-[28px] pt-[5px] flex items-center justify-between text-[#555] pr-[1px]">
                <span>按类型显示</span>
                <S s={11} v={11} c="#555" w={1.200}><path d="M2 2l7 7M9 2l-7 7" /></S>
              </div>
              <div className="flex flex-col gap-[1.400px] w-[102px]">
                {types.map((t, i) => (
                  <div key={t} className={`h-[23px] flex items-center justify-center text-[#555] border-[1.500px] ${i === 1 ? "bg-white border-[#d0d0d0]" : "bg-[#bde0fa] border-[#1c6ea4]"}`}>{t}</div>
                ))}
              </div>
            </div>
          </div>
          <div className="h-[3px] bg-white shrink-0" />
          <div className="h-[26px] bg-[#e5e5e5] flex items-start shrink-0">
            <div className="w-[97px] h-[23px] bg-white border border-t-0 border-[#aaa] flex items-center justify-center font-semibold text-[#333] whitespace-nowrap">[1] 零件1.main</div>
            <div className="ml-auto h-full flex items-center pr-[6px] gap-[7px]">
              <S s={10} v={10} c="#666" w={0.900}><path d="M7 1L2 5l5 4z" /></S>
              <S s={10} v={10} c="#666" w={0.900}><path d="M3 1l5 4-5 4z" /></S>
            </div>
          </div>
        </div>
      </div>
      {/* status */}
      <div className="relative flex-1 min-h-0 flex flex-col">
        <div className="ml-[773px] mt-px h-[21px] w-[1146px] bg-[#eff1ef] border border-[#7f9f7f] border-b-[#222] border-r-[#222] shrink-0" />
        <div className="flex-1 flex items-end justify-between pl-[4px] pr-[31px] text-[#555]">
          <span>请选择命令</span>
          <span className="text-[#444] whitespace-pre">X =      49.455, Y =      -1.324, Z =      -2.343</span>
        </div>
        <div className="absolute left-[1344px] bottom-0 flex items-end">
          <div className="w-[31px] h-[29px] bg-[#f05a22] rounded-[4px] -rotate-12 flex items-center justify-center text-white text-[24px] font-bold font-['Liberation_Sans'] leading-none">S</div>
          <div className="w-[121px] h-[25px] bg-white flex items-center text-[#0a6cc8] border-r border-[#cfe0f0]">
            <div className="w-[26px] text-center text-[14px] font-bold">中</div>
            <div className="w-[24px] text-center text-[14px] font-bold leading-none">°,</div>
            <div className="w-[24px] flex justify-center"><S s={16} v={16} c="#0a6cc8" w={1.300}><rect x="5.500" y="1" width="5" height="9" rx="2.500" fill="#0a6cc8" /><path d="M3 8q0 5 5 5t5-5M8 13v2" /></S></div>
            <div className="w-[25px] flex justify-center"><S s={16} v={16} c="#0a6cc8" w={1.200}><rect x="1" y="3" width="14" height="10" rx="1.500" /><path d="M3.500 6h9M3.500 8h9M5 10.500h6" strokeDasharray="1.200 1.200" /></S></div>
            <div className="w-[24px] grid grid-cols-2 gap-[2px] justify-items-center px-[4px]">
              {[0, 1, 2, 3].map((i) => <div key={i} className={`w-[6px] h-[6px] bg-[#0a6cc8] ${i === 1 ? "rounded-full" : "rounded-[1px]"}`} />)}
            </div>
          </div>
        </div>
        <div className="absolute left-[1638px] top-[18px] text-[#ffffff] opacity-80 text-[15px] font-['Liberation_Sans'] whitespace-nowrap">https://blog.csdn.net/weixin_43911798</div>
      </div>
    </div>
  );
}
